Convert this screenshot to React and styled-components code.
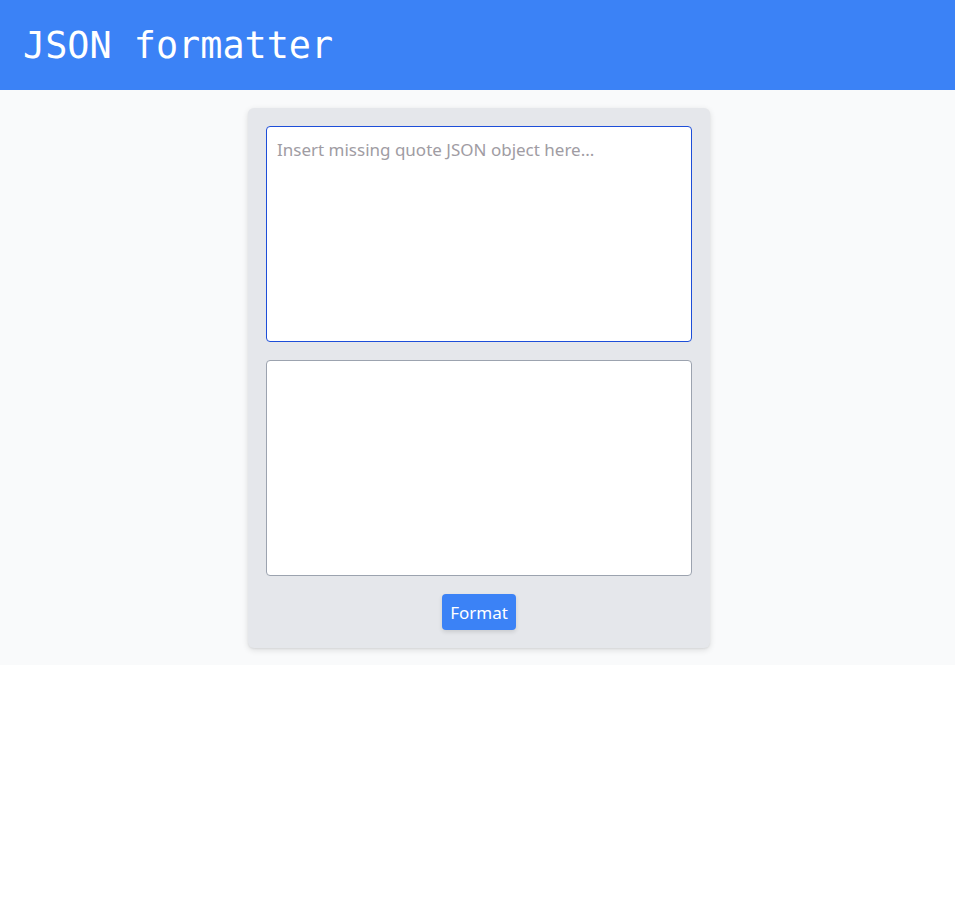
import React from "react";
import styled, { createGlobalStyle } from "styled-components";

const Global = createGlobalStyle`
  html, body { margin: 0; padding: 0; background: #ffffff; }
  body { font-family: "Noto Sans", "Open Sans", sans-serif; }
  * { box-sizing: border-box; }
`;

const Header = styled.header`
  height: 90px;
  background: #3b82f6;
  display: flex;
  align-items: center;
  padding: 0 23px;
`;

const Title = styled.h1`
  margin: 0;
  font-family: "DejaVu Sans Mono", "Liberation Mono", monospace;
  font-weight: 400;
  font-size: 36.8px;
  color: #ffffff;
  letter-spacing: 0;
`;

const Main = styled.main`
  background: #f9fafb;
  padding: 18px 0 17px 3px;
  display: flex;
  justify-content: center;
`;

const Card = styled.div`
  width: 462px;
  background: #e5e7eb;
  border-radius: 6px;
  box-shadow: 0 2px 6px rgba(0, 0, 0, 0.12), 0 1px 2px rgba(0, 0, 0, 0.06);
  padding: 18px;
  display: flex;
  flex-direction: column;
  align-items: center;
  gap: 18px;
`;

const Area = styled.textarea`
  display: block;
  width: 426px;
  height: ${(p) => (p.$focused ? "216px" : "216px")};
  resize: none;
  background: #ffffff;
  border: 1px solid ${(p) => (p.$focused ? "#1d4ed8" : "#9ca3af")};
  border-radius: 4px;
  padding: 11px 10px;
  font-family: "Noto Sans", "Open Sans", sans-serif;
  font-size: 17px;
  line-height: 24px;
  color: #111827;
  outline: none;
  &::placeholder { color: #a09ca3; }
`;

const Button = styled.button`
  height: 36px;
  width: 74px;
  padding: 0;
  border: none;
  border-radius: 4px;
  background: #3b82f6;
  color: #ffffff;
  font-family: "Noto Sans", "Open Sans", sans-serif;
  font-size: 17px;
  box-shadow: 0 2px 4px rgba(0, 0, 0, 0.12);
  cursor: pointer;
`;

export default function App() {
  return (
    <>
      <Global />
      <Header>
        <Title>JSON formatter</Title>
      </Header>
      <Main>
        <Card>
          <Area $focused placeholder="Insert missing quote JSON object here..." />
          <Area readOnly />
          <Button>Format</Button>
        </Card>
      </Main>
    </>
  );
}
